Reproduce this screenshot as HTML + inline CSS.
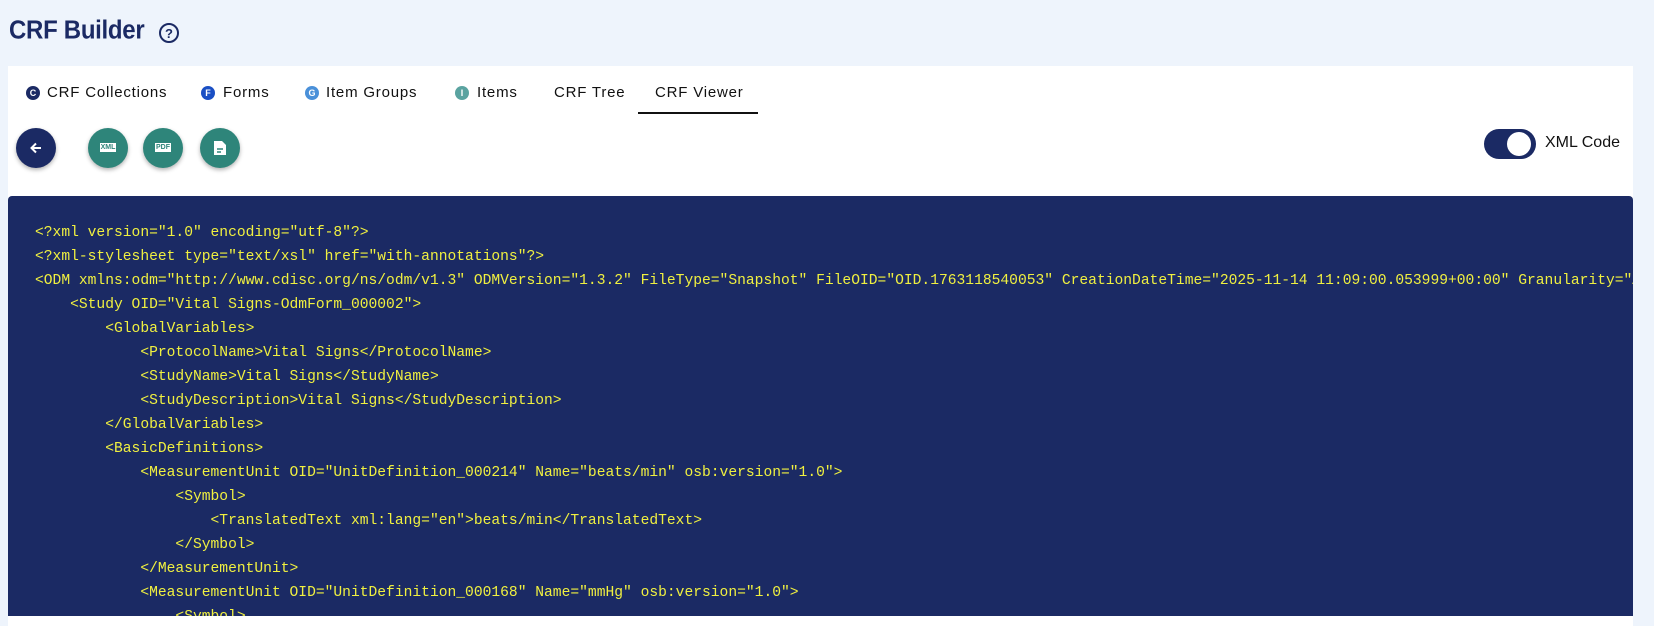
<!DOCTYPE html>
<html><head><meta charset="utf-8"><style>
*{margin:0;padding:0;box-sizing:border-box}
body{width:1654px;height:613px;overflow:hidden;background:#eef4fc;font-family:"Liberation Sans",sans-serif;position:relative}
.title{position:absolute;left:9px;top:16px;font-size:24px;font-weight:bold;color:#1b2a64;letter-spacing:-0.3px;transform:scaleY(1.08);transform-origin:top left}
.help{position:absolute;left:159px;top:23px;width:20px;height:20px;border:2px solid #1b2a64;border-radius:50%;font-size:13px;font-weight:bold;color:#1b2a64;text-align:center;line-height:17px}
.panel{position:absolute;left:8px;top:66px;width:1625px;height:560px;background:#fff}
.tab{position:absolute;top:84px;font-size:15px;color:#111;letter-spacing:0.8px;line-height:18px;white-space:nowrap}
.ic{position:absolute;top:86px;width:14px;height:14px;border-radius:50%;color:#fff;font-size:9px;font-weight:bold;text-align:center;line-height:14px}
.ul{position:absolute;left:638px;top:112px;width:120px;height:2px;background:#111}
.btn{position:absolute;top:128px;width:40px;height:40px;border-radius:50%;background:#2e857a;box-shadow:0 2px 4px rgba(0,0,0,.3);color:#fff;font-size:7px;font-weight:bold;text-align:center;line-height:40px}
.btn span{background:#fff;color:#2e857a;padding:1px 1px}
.tog{position:absolute;left:1484px;top:129px;width:52px;height:30px;border-radius:15px;background:#1b2a64}
.tog:after{content:"";position:absolute;left:23px;top:3px;width:24px;height:24px;border-radius:50%;background:#fff}
.xl{position:absolute;left:1545px;top:134px;font-size:16px;color:#111}
.code{position:absolute;left:8px;top:196px;width:1625px;height:420px;background:#1b2a64;border-radius:4px 4px 0 0;overflow:hidden}
pre{position:absolute;left:27px;top:25px;font-family:"Liberation Mono",monospace;font-size:14.64px;line-height:24px;color:#f0f040;white-space:pre}
</style></head><body>
<div class="title">CRF Builder</div><div class="help">?</div>
<div class="panel"></div>
<div class="ic" style="left:26px;background:#1b2a64">C</div><div class="tab" style="left:47px">CRF Collections</div>
<div class="ic" style="left:201px;background:#1a4fc4">F</div><div class="tab" style="left:223px">Forms</div>
<div class="ic" style="left:305px;background:#4a90d9">G</div><div class="tab" style="left:326px">Item Groups</div>
<div class="ic" style="left:455px;background:#5aa3a0">I</div><div class="tab" style="left:477px">Items</div>
<div class="tab" style="left:554px">CRF Tree</div>
<div class="tab" style="left:655px">CRF Viewer</div>
<div class="ul"></div>
<div class="btn" style="left:16px;background:#1b2a64"><svg width="14" height="14" viewBox="0 0 14 14" style="margin-top:13px"><path d="M12 7H3M7 2.5L2.5 7 7 11.5" stroke="#fff" stroke-width="2" fill="none"/></svg></div>
<div class="btn" style="left:88px"><span>XML</span></div>
<div class="btn" style="left:143px"><span>PDF</span></div>
<div class="btn" style="left:200px"><svg width="14" height="16" viewBox="0 0 14 16" style="margin-top:12px"><path d="M1 1h8l4 4v10H1z" fill="#fff"/><path d="M4 9h6M4 12h4" stroke="#2e857a" stroke-width="1.5"/></svg></div>
<div class="tog"></div><div class="xl">XML Code</div>
<div class="code"><pre>&lt;?xml version="1.0" encoding="utf-8"?&gt;
&lt;?xml-stylesheet type="text/xsl" href="with-annotations"?&gt;
&lt;ODM xmlns:odm="http://www.cdisc.org/ns/odm/v1.3" ODMVersion="1.3.2" FileType="Snapshot" FileOID="OID.1763118540053" CreationDateTime="2025-11-14 11:09:00.053999+00:00" Granularity="All"
    &lt;Study OID="Vital Signs-OdmForm_000002"&gt;
        &lt;GlobalVariables&gt;
            &lt;ProtocolName&gt;Vital Signs&lt;/ProtocolName&gt;
            &lt;StudyName&gt;Vital Signs&lt;/StudyName&gt;
            &lt;StudyDescription&gt;Vital Signs&lt;/StudyDescription&gt;
        &lt;/GlobalVariables&gt;
        &lt;BasicDefinitions&gt;
            &lt;MeasurementUnit OID="UnitDefinition_000214" Name="beats/min" osb:version="1.0"&gt;
                &lt;Symbol&gt;
                    &lt;TranslatedText xml:lang="en"&gt;beats/min&lt;/TranslatedText&gt;
                &lt;/Symbol&gt;
            &lt;/MeasurementUnit&gt;
            &lt;MeasurementUnit OID="UnitDefinition_000168" Name="mmHg" osb:version="1.0"&gt;
                &lt;Symbol&gt;</pre></div>
</body></html>
